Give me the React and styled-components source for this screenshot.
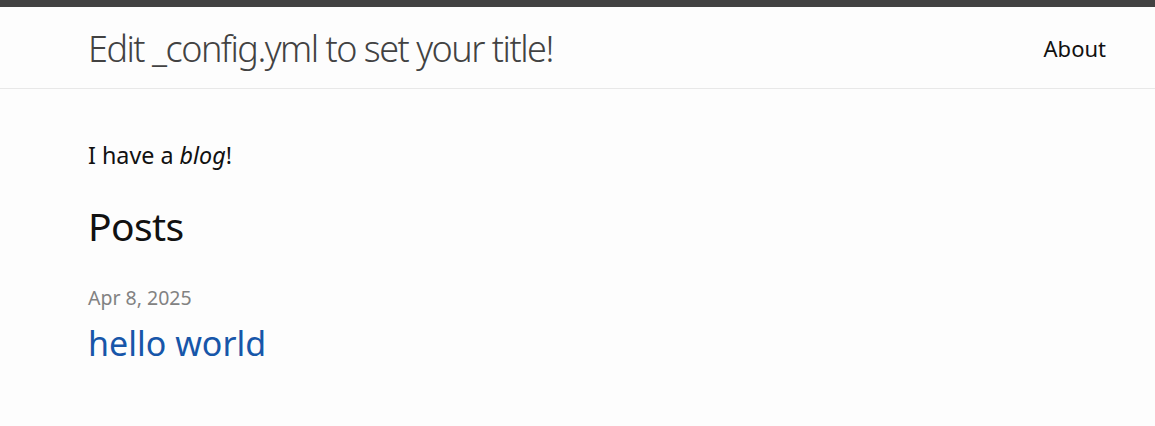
import React from 'react';
import styled, { createGlobalStyle } from 'styled-components';

const GlobalStyle = createGlobalStyle`
  html, body {
    margin: 0;
    padding: 0;
    background: #fdfdfd;
  }
  body {
    font-family: "Noto Sans", "Open Sans", sans-serif;
    color: #111111;
  }
`;

const SiteHeader = styled.header`
  border-top: 7px solid #424242;
  border-bottom: 1px solid #e8e8e8;
  background: #fdfdfd;
`;

const Wrapper = styled.div`
  padding: 0 49px 0 88px;
`;

const HeaderInner = styled(Wrapper)`
  height: 81px;
  display: flex;
  align-items: center;
  justify-content: space-between;
`;

const SiteTitle = styled.a`
  font-size: 36px;
  font-weight: 300;
  letter-spacing: -1.5px;
  color: #424242;
  text-decoration: none;
  line-height: 1;
  padding-top: 3px;
`;

const NavLink = styled.a`
  font-size: 22px;
  color: #111111;
  text-decoration: none;
  line-height: 1;
`;

const Main = styled(Wrapper)`
  padding-top: 48px;
`;

const Intro = styled.p`
  margin: 0 0 30px;
  font-size: 23.3px;
  line-height: 1.55;
`;

const ListHeading = styled.h2`
  margin: 0 0 35px;
  font-size: 39px;
  font-weight: 400;
  letter-spacing: -0.6px;
  line-height: 1.2;
`;

const PostList = styled.ul`
  list-style: none;
  margin: 0;
  padding: 0;
`;

const PostMeta = styled.span`
  display: block;
  font-size: 19.5px;
  color: #828282;
  line-height: 1.3;
`;

const PostLink = styled.a`
  display: block;
  margin-top: 11px;
  font-size: 34px;
  color: #1756a9;
  text-decoration: none;
  line-height: 1.3;
`;

const posts = [{ date: 'Apr 8, 2025', title: 'hello world' }];

export default function App() {
  return (
    <>
      <GlobalStyle />
      <SiteHeader>
        <HeaderInner>
          <SiteTitle href="#">Edit _config.yml to set your title!</SiteTitle>
          <NavLink href="#">About</NavLink>
        </HeaderInner>
      </SiteHeader>
      <Main>
        <Intro>
          I have a <em>blog</em>!
        </Intro>
        <ListHeading>Posts</ListHeading>
        <PostList>
          {posts.map(post => (
            <li key={post.title}>
              <PostMeta>{post.date}</PostMeta>
              <PostLink href="#">{post.title}</PostLink>
            </li>
          ))}
        </PostList>
      </Main>
    </>
  );
}
